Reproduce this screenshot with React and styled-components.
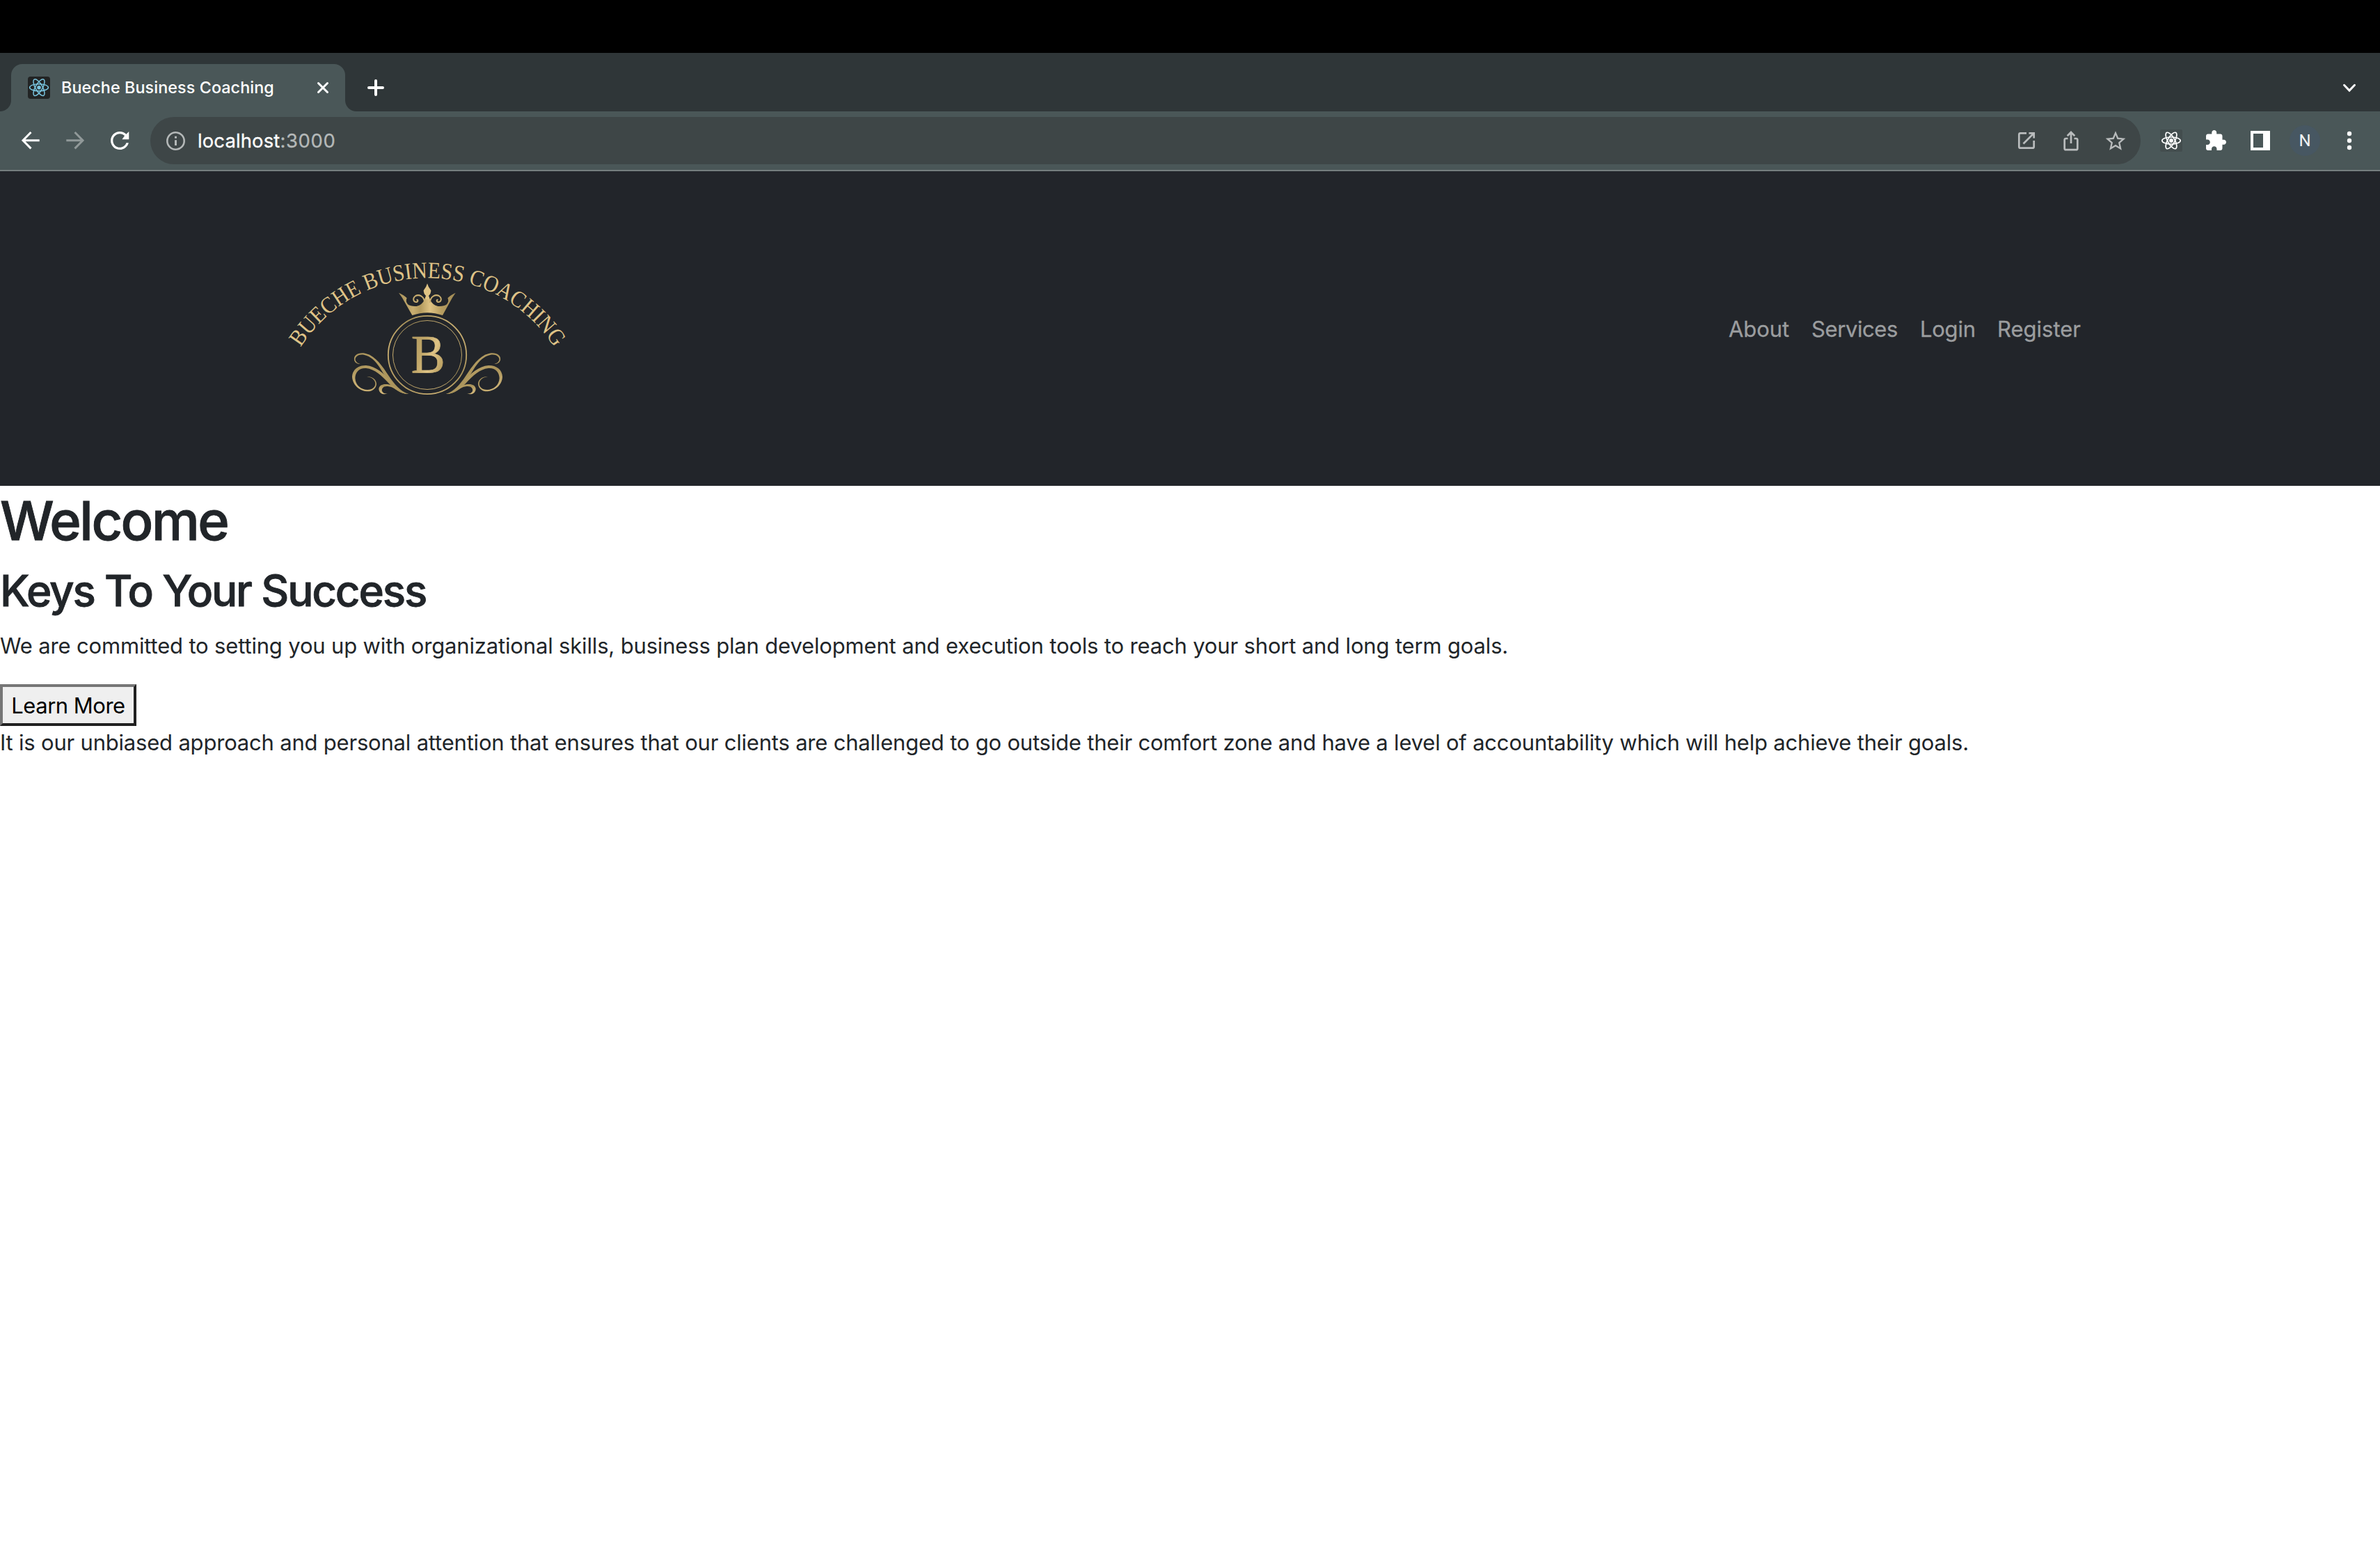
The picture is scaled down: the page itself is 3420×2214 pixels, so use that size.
import React from 'react';
import styled, { createGlobalStyle } from 'styled-components';

const GlobalStyle = createGlobalStyle`
  *, *::before, *::after { box-sizing: border-box; }
  body {
    margin: 0;
    background: #fff;
    color: #212529;
    font-family: Inter, "Liberation Sans", sans-serif;
    font-size: 31px;
    line-height: 48px;
  }
`;

const Window = styled.div`
  display: flex;
  flex-direction: column;
  min-height: 2214px;
`;

const MenuBarGap = styled.div`
  height: 76px;
  background: #000;
`;

const TabStrip = styled.div`
  display: flex;
  align-items: flex-end;
  height: 84px;
  padding: 0 12px 0 16px;
  background: #2f3638;
`;

const Tab = styled.div`
  position: relative;
  display: flex;
  align-items: center;
  width: 480px;
  height: 68px;
  padding: 0 16px 0 24px;
  border-radius: 16px 16px 0 0;
  background: #4a5758;

  &::before, &::after {
    content: "";
    position: absolute;
    bottom: 0;
    width: 16px;
    height: 16px;
  }
  &::before {
    left: -16px;
    background: radial-gradient(circle at 0 0, transparent 15.5px, #4a5758 16.5px);
  }
  &::after {
    right: -16px;
    background: radial-gradient(circle at 100% 0, transparent 15.5px, #4a5758 16.5px);
  }
`;

const Favicon = styled.span`
  display: flex;
  width: 32px;
  height: 32px;
  margin-right: 16px;
  border-radius: 4px;
  background: #222424;
`;

const TabTitle = styled.span`
  flex: 1;
  color: #fff;
  font-size: 23.3px;
  font-weight: 500;
  line-height: 32px;
  letter-spacing: 0.1px;
  white-space: nowrap;
`;

const StripButton = styled.span`
  display: flex;
  align-items: center;
  justify-content: center;
  width: ${(p) => p.$width}px;
  height: 68px;
  margin-left: ${(p) => p.$gap || '0'};
`;

const Toolbar = styled.div`
  display: flex;
  align-items: center;
  height: 86px;
  padding: 0 12px;
  border-bottom: 2px solid #757e7e;
  background: #4a5758;
`;

const Slot = styled.span`
  display: flex;
  flex: none;
  align-items: center;
  justify-content: center;
  width: 64px;
  height: 64px;
`;

const Omnibox = styled.div`
  display: flex;
  flex: 1;
  align-items: center;
  height: 68px;
  margin: 0 12px;
  padding: 0 4px 0 4px;
  border-radius: 34px;
  background: #3e4647;
`;

const Address = styled.div`
  flex: 1;
  color: #b4b8b8;
  font-size: 27.4px;
  line-height: 36px;
  letter-spacing: 0.7px;
  -webkit-text-stroke: 0.3px currentColor;
`;

const Host = styled.span`
  color: #fff;
  letter-spacing: 0.15px;
`;

const ExtensionTile = styled.span`
  display: flex;
  width: 32px;
  height: 32px;
  border-radius: 2px;
  background: #434d4e;
`;

const Avatar = styled.span`
  display: flex;
  align-items: center;
  justify-content: center;
  width: 44px;
  height: 44px;
  border-radius: 50%;
  background: #475762;
  color: #f1f3f4;
  font: 400 24px/44px Roboto, "Liberation Sans", sans-serif;
`;

const Navbar = styled.nav`
  display: flex;
  justify-content: center;
  height: 452px;
  background: #22252a;
`;

const NavContainer = styled.div`
  display: flex;
  align-items: center;
  justify-content: space-between;
  width: 2640px;
  padding: 0 24px;
`;

const Brand = styled.a`
  display: block;
  width: 400px;
  height: 400px;
`;

const NavLinks = styled.ul`
  display: flex;
  margin: 0;
  padding: 2px 0 0;
  list-style: none;
`;

const NavItem = styled.li`
  width: ${(p) => p.$width}px;
  padding-left: 16px;
  color: #9b9d9f;
  letter-spacing: ${(p) => p.$tracking}px;
  white-space: nowrap;
  -webkit-text-stroke: 0.3px currentColor;
`;

const Main = styled.main`
  display: flex;
  flex-direction: column;
  align-items: flex-start;
  padding-top: 2px;
`;

const Title = styled.h1`
  margin: 0 0 14px;
  font-size: 77.5px;
  font-weight: 500;
  line-height: 96px;
  letter-spacing: -2.5px;
  -webkit-text-stroke: 0.9px currentColor;
`;

const Subtitle = styled.h2`
  margin: 0 0 15px;
  font-size: 62px;
  font-weight: 500;
  line-height: 78px;
  letter-spacing: -2.18px;
  -webkit-text-stroke: 0.8px currentColor;
`;

const Lead = styled.p`
  margin: 0 0 30px;
  line-height: 50px;
  letter-spacing: -0.165px;
`;

const Copy = styled.p`
  margin: 0;
  letter-spacing: -0.2px;
`;

const LearnMore = styled.button`
  width: 196px;
  height: 60px;
  padding: 1px 0 0 0;
  border: 4px solid;
  border-color: #767676 #212121 #212121 #767676;
  background: #efefef;
  color: #000;
  font-family: inherit;
  font-size: 31px;
  line-height: 48px;
  letter-spacing: -0.5px;
  text-align: center;
`;

function Glyph({ size = 64, children }) {
  return (
    <svg width={size} height={size} viewBox={`${-size / 2} ${-size / 2} ${size} ${size}`} fill="none">
      {children}
    </svg>
  );
}

function Atom({ color, width, rx, ry, dot, dy = 0 }) {
  return (
    <Glyph size={32}>
      <g transform={`translate(0 ${dy})`} stroke={color} strokeWidth={width}>
        <ellipse rx={rx} ry={ry} />
        <ellipse rx={rx} ry={ry} transform="rotate(60)" />
        <ellipse rx={rx} ry={ry} transform="rotate(120)" />
        <circle r={dot} fill={color} stroke="none" />
      </g>
    </Glyph>
  );
}

function Swirls() {
  return (
    <g fill="url(#goldSwirl)">
      <path d="M384 518C362 520 353 504 358 489C364 474 384 469 404 473C448 482 478 528 506 570C530 606 556 636 590 648C560 650 534 628 512 606C480 566 458 490 398 479C374 475 359 490 362 502C366 513 374 517 384 518Z" />
      <path d="M411 574C436 570 454 588 453 606C451 626 434 638 412 637C376 634 349 606 348 574C349 542 376 524 408 525C450 528 484 560 514 592C530 612 556 640 576 646C548 642 520 618 504 600C476 570 446 541 408 537C380 535 362 552 361 580C362 612 388 630 414 630C436 630 448 618 448 604C447 588 434 576 411 574Z" />
      <path d="M500 646C484 654 464 646 463 626C465 608 484 603 504 607C534 612 556 640 592 648C556 650 536 620 506 616C484 612 474 624 477 636C481 645 490 647 500 646Z" />
    </g>
  );
}

function Logo() {
  return (
    <svg width="400" height="400" viewBox="72 -234 1200 1200" overflow="visible">
      <defs>
        <linearGradient id="goldCrown" x1="0" x2="1" y1="0" y2="0">
          <stop offset="0" stopColor="#a8925a" />
          <stop offset="0.25" stopColor="#c9ae70" />
          <stop offset="0.38" stopColor="#b39a5e" />
          <stop offset="0.55" stopColor="#dfc384" />
          <stop offset="0.75" stopColor="#b79d60" />
          <stop offset="1" stopColor="#a08a55" />
        </linearGradient>
        <linearGradient id="goldLetter" x1="0" x2="1" y1="0" y2="0.6">
          <stop offset="0" stopColor="#a8915a" />
          <stop offset="0.45" stopColor="#c2a86a" />
          <stop offset="0.7" stopColor="#e0c485" />
          <stop offset="1" stopColor="#b79d60" />
        </linearGradient>
        <linearGradient id="goldRing" x1="0" x2="1" y1="1" y2="0">
          <stop offset="0" stopColor="#a08a55" />
          <stop offset="0.3" stopColor="#cbb072" />
          <stop offset="0.6" stopColor="#a8925a" />
          <stop offset="1" stopColor="#d9bd7e" />
        </linearGradient>
        <linearGradient id="goldSwirl" x1="0" x2="1" y1="1" y2="0">
          <stop offset="0" stopColor="#dcc081" />
          <stop offset="0.5" stopColor="#a8925a" />
          <stop offset="1" stopColor="#cfb475" />
        </linearGradient>
        <path id="nameArc" d="M126 447A649 649 0 0 1 1219 447L1262 519" />
      </defs>
      <text
        fill="#dfc387"
        fontFamily="'Liberation Serif', serif"
        fontSize="100"
        textLength="1300"
        lengthAdjust="spacingAndGlyphs"
      >
        <textPath href="#nameArc" textLength="1300" lengthAdjust="spacingAndGlyphs">
          BUECHE BUSINESS COACHING
        </textPath>
      </text>
      <path
        fill="url(#goldCrown)"
        d="M607 309L580 262Q565 232 549 212Q572 222 584 235Q577 247 588 262Q602 272 626 270Q650 264 659 244Q664 232 668 224H676Q680 232 685 244Q694 264 718 270Q742 272 756 262Q767 247 760 235Q772 222 794 212Q779 232 764 262L738 309Q672 286 607 309Z"
      />
      <path fill="#dfc384" d="M672 172Q676 188 688 202Q688 216 678 225L683 240H661L666 225Q656 216 656 202Q668 188 672 172Z" />
      <g fill="none" stroke="#c9ae70" strokeWidth="6" strokeLinecap="round">
        <path d="M660 252C658 226 636 218 622 225C608 234 610 252 626 252C633 250 632 242 628 242" />
        <path d="M684 252C686 226 708 218 722 225C736 234 734 252 718 252C711 250 712 242 716 242" />
      </g>
      <circle cx="672" cy="480" r="168.500" fill="none" stroke="url(#goldRing)" strokeWidth="5.500" />
      <circle cx="672" cy="480" r="148.500" fill="none" stroke="url(#goldRing)" strokeWidth="3" />
      <text
        x="602"
        y="556"
        fill="url(#goldLetter)"
        stroke="url(#goldLetter)"
        strokeWidth="2"
        fontFamily="'Liberation Serif', serif"
        fontSize="237"
        textLength="147"
        lengthAdjust="spacingAndGlyphs"
      >
        B
      </text>
      <Swirls />
      <g transform="translate(1344 0) scale(-1 1)">
        <Swirls />
      </g>
    </svg>
  );
}

const links = [
  { label: 'About', width: 119, tracking: -0.1 },
  { label: 'Services', width: 156, tracking: -0.4 },
  { label: 'Login', width: 111, tracking: -0.25 },
  { label: 'Register', width: 152, tracking: 0 },
];

function BrowserTabs() {
  return (
    <TabStrip>
      <Tab>
        <Favicon>
          <Atom color="#79c4de" width={1.5} rx={13.4} ry={5} dot={2.8} dy={-0.3} />
        </Favicon>
        <TabTitle>Bueche Business Coaching</TabTitle>
        <StripButton $width={32}>
          <Glyph size={32}>
            <path d="M-6.500 -6.500L6.500 6.500M6.500 -6.500L-6.500 6.500" stroke="#fff" strokeWidth="3" strokeLinecap="round" />
          </Glyph>
        </StripButton>
      </Tab>
      <StripButton $width={56} $gap="16px">
        <Glyph size={32}>
          <path d="M-10 0H10M0 -10V10" stroke="#fff" strokeWidth="4" strokeLinecap="round" />
        </Glyph>
      </StripButton>
      <StripButton $width={64} $gap="auto">
        <Glyph size={32}>
          <path d="M-7.500 -3.700L0 4L7.500 -3.700" stroke="#fff" strokeWidth="3" strokeLinecap="round" />
        </Glyph>
      </StripButton>
    </TabStrip>
  );
}

function BrowserToolbar() {
  return (
    <Toolbar>
      <Slot>
        <Glyph>
          <path d="M0.500 -12L-11 -0.300L0.500 11.400M-11 -0.300H12.700" stroke="#fff" strokeWidth="3" />
        </Glyph>
      </Slot>
      <Slot>
        <Glyph>
          <path d="M-0.500 -12L11 -0.300L-0.500 11.400M11 -0.300H-12.700" stroke="#919999" strokeWidth="3" />
        </Glyph>
      </Slot>
      <Slot>
        <Glyph>
          <g transform="scale(1.640) translate(-11.900 -12)">
            <path
              fill="#fff"
              d="M17.650 6.350C16.200 4.900 14.210 4 12 4c-4.420 0-7.990 3.580-7.990 8s3.570 8 7.990 8c3.730 0 6.840-2.550 7.730-6h-2.080c-.820 2.330-3.040 4-5.650 4-3.310 0-6-2.690-6-6s2.690-6 6-6c1.660 0 3.140.690 4.220 1.780L14 11h6V4l-2.350 2.350z"
            />
          </g>
        </Glyph>
      </Slot>
      <Omnibox>
        <Slot>
          <Glyph>
            <circle cx="0.500" cy="0.500" r="12.200" stroke="#b4b8b8" strokeWidth="2.600" />
            <path d="M0.500 -6.300V-3.300M0.500 -0.800V7" stroke="#b4b8b8" strokeWidth="3" />
          </Glyph>
        </Slot>
        <Address>
          <Host>localhost</Host>:3000
        </Address>
        <Slot>
          <Glyph>
            <g stroke="#b9bcbd" strokeWidth="2.700">
              <path d="M0 -10.700H-8.700Q-10.700 -10.700 -10.700 -8.700V8.700Q-10.700 10.700 -8.700 10.700H8.700Q10.700 10.700 10.700 8.700V0" />
              <path d="M-4.500 4.500L10 -10M3.500 -10.700H10.700V-3.500" />
            </g>
          </Glyph>
        </Slot>
        <Slot>
          <Glyph>
            <g stroke="#b9bcbd" strokeWidth="2.700">
              <path d="M-4.500 -3H-7.300Q-9.300 -3 -9.300 -1V11.200Q-9.300 13.200 -7.300 13.200H7.300Q9.300 13.200 9.300 11.200V-1Q9.300 -3 7.300 -3H4.500" />
              <path d="M0 4V-12M-5.300 -6.700L0 -12L5.300 -6.700" />
            </g>
          </Glyph>
        </Slot>
        <Slot>
          <Glyph>
            <g transform="scale(1.430 1.460) translate(-12 -11.500)">
              <path
                fill="#b9bcbd"
                d="M22 9.240l-7.190-.620L12 2 9.190 8.630 2 9.240l5.460 4.730L5.820 21 12 17.270 18.180 21l-1.630-7.030L22 9.240zM12 15.400l-3.760 2.270 1-4.280-3.320-2.880 4.380-.380L12 6.100l1.710 4.040 4.380.380-3.320 2.880 1 4.280L12 15.400z"
              />
            </g>
          </Glyph>
        </Slot>
      </Omnibox>
      <Slot>
        <ExtensionTile>
          <Atom color="#fff" width={1.7} rx={13.2} ry={5} dot={2.9} />
        </ExtensionTile>
      </Slot>
      <Slot>
        <Glyph>
          <g transform="translate(0.500 -0.500) scale(1.380) translate(-12.500 -11.500)">
            <path
              fill="#fff"
              d="M20.500 11H19V7c0-1.100-.900-2-2-2h-4V3.500C13 2.120 11.880 1 10.500 1S8 2.120 8 3.500V5H4c-1.100 0-1.990.900-1.990 2v3.800H3.500c1.490 0 2.700 1.210 2.700 2.700s-1.210 2.700-2.700 2.700H2V20c0 1.100.900 2 2 2h3.800v-1.500c0-1.490 1.210-2.700 2.700-2.700 1.490 0 2.700 1.210 2.700 2.700V22H17c1.100 0 2-.900 2-2v-4h1.500c1.380 0 2.500-1.120 2.500-2.500S21.880 11 20.500 11z"
            />
          </g>
        </Glyph>
      </Slot>
      <Slot>
        <Glyph>
          <path fill="#fff" fillRule="evenodd" d="M-14 -14H14V14H-14ZM-10 -10V10H4V-10Z" />
        </Glyph>
      </Slot>
      <Slot>
        <Avatar>N</Avatar>
      </Slot>
      <Slot>
        <Glyph>
          <g fill="#fff">
            <circle cy="-10" r="3.200" />
            <circle r="3.200" />
            <circle cy="10" r="3.200" />
          </g>
        </Glyph>
      </Slot>
    </Toolbar>
  );
}

export default function App() {
  return (
    <>
      <GlobalStyle />
      <Window>
        <MenuBarGap />
        <BrowserTabs />
        <BrowserToolbar />
        <Navbar>
          <NavContainer>
            <Brand>
              <Logo />
            </Brand>
            <NavLinks>
              {links.map((l) => (
                <NavItem key={l.label} $width={l.width} $tracking={l.tracking}>
                  {l.label}
                </NavItem>
              ))}
            </NavLinks>
          </NavContainer>
        </Navbar>
        <Main>
          <Title>Welcome</Title>
          <Subtitle>Keys To Your Success</Subtitle>
          <Lead>
            We are committed to setting you up with organizational skills, business plan development and execution tools
            to reach your short and long term goals.
          </Lead>
          <LearnMore>Learn More</LearnMore>
          <Copy>
            It is our unbiased approach and personal attention that ensures that our clients are challenged to go
            outside their comfort zone and have a level of accountability which will help achieve their goals.
          </Copy>
        </Main>
      </Window>
    </>
  );
}
